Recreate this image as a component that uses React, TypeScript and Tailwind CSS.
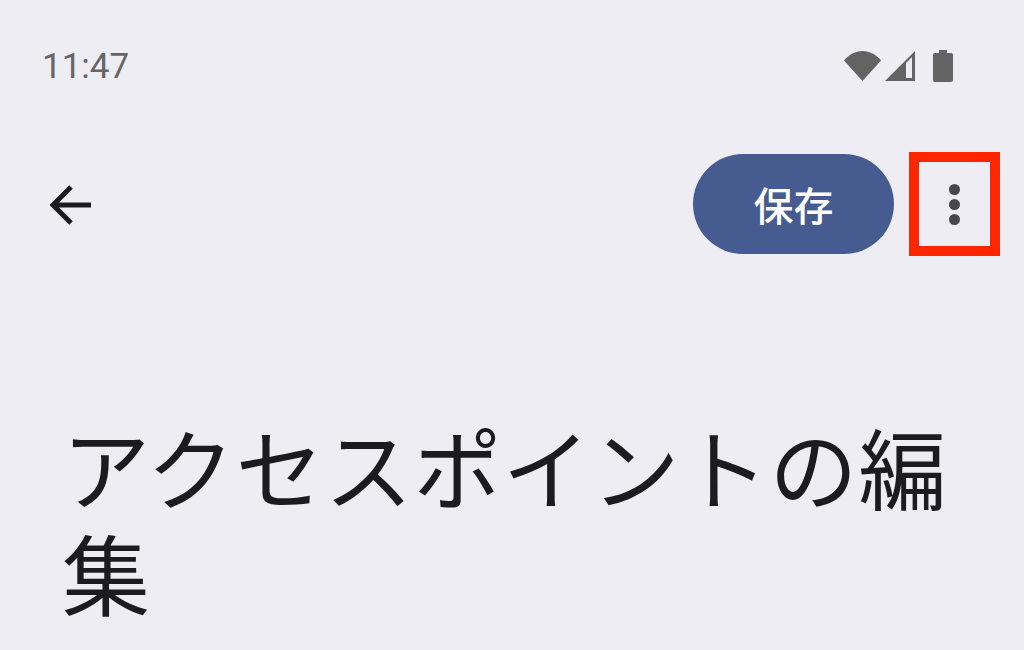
export default function App() {
  return (
    <div className="h-[650px] w-[1024px] overflow-hidden bg-[#eeedf4] font-['Roboto','Noto_Sans_CJK_JP',sans-serif]">
      {/* status bar */}
      <div className="flex h-[132px] items-center justify-between pl-[42px] pr-[71px]">
        <span className="text-[35px] leading-none text-[#666666]">11:47</span>
        <div className="flex items-center">
          <svg width="38" height="32" viewBox="0 0 38 32" className="fill-[#636363]">
            <path d="M0 10.5C5 4.5 11.5 1 18.5 1S32 4.5 37 10.5L18.5 31z" />
          </svg>
          <svg width="32" height="32" viewBox="0 0 32 32" className="ml-[2px] fill-[#636363]">
            <path fillRule="evenodd" d="M1 31 31 1v30zM22 28h6V7l-6 6z" />
          </svg>
          <svg width="20" height="34" viewBox="0 0 20 34" className="ml-[17px] fill-[#636363]">
            <path d="M6 1h8v3h4a2 2 0 0 1 2 2v25a2 2 0 0 1-2 2H2a2 2 0 0 1-2-2V6a2 2 0 0 1 2-2h4z" />
          </svg>
        </div>
      </div>

      {/* app bar */}
      <div className="mt-[20px] flex h-[104px] items-center pl-[50px] pr-[24px]">
        <svg width="42" height="40" viewBox="0 0 42 40" fill="none" className="mt-[2px] stroke-[#1c1b20]">
          <path d="M41 20H4M21 2 3 20l18 18" strokeWidth="5" />
        </svg>
        <button className="ml-auto flex h-[100px] w-[201px] items-center justify-center rounded-full bg-[#465c90] pt-[7px] text-[40px] font-medium text-white">
          保存
        </button>
        <div className="ml-[15px] flex h-[104px] w-[91px] flex-col items-center justify-center gap-[4px] border-[10px] border-[#ff2600]">
          <span className="h-[11px] w-[11px] rounded-full bg-[#46464f]" />
          <span className="h-[11px] w-[11px] rounded-full bg-[#46464f]" />
          <span className="h-[11px] w-[11px] rounded-full bg-[#46464f]" />
        </div>
      </div>

      {/* title */}
      <h1 className="mt-[164px] w-[960px] pl-[62px] text-[88px] font-normal leading-[106px] tracking-[1px] text-[#1c1b20]">
        アクセスポイントの編集
      </h1>
    </div>
  );
}
